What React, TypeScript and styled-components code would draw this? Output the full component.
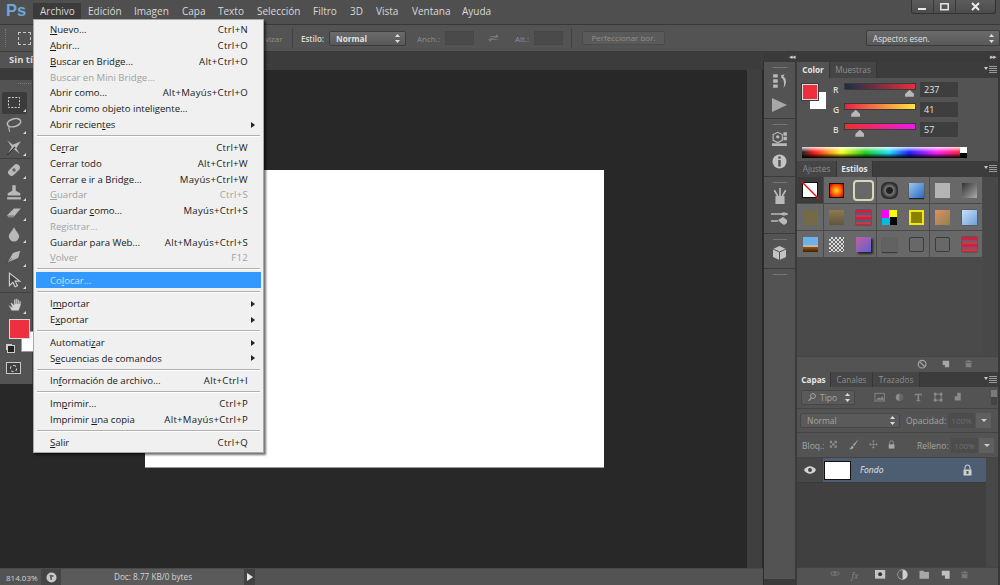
import React from "react";
import styled, { createGlobalStyle } from "styled-components";

const Global = createGlobalStyle`
  html, body { margin: 0; padding: 0; background: #535353; }
  * { box-sizing: border-box; }
  body { font-family: "Open Sans", "Noto Sans", "Liberation Sans", sans-serif; }
  u { text-underline-offset: 1px; text-decoration-thickness: 1px; }
`;

const Screen = styled.div`
  position: relative; width: 1000px; height: 585px; overflow: hidden;
  display: flex; flex-direction: column; background: #535353;
  font-size: 9.5px; color: #d6d6d6;
`;

/* ---------- menu bar ---------- */
const MenuBar = styled.div`
  height: 24px; flex: none; display: flex; align-items: flex-start;
  padding-left: 6px; background: #4f4f4f;
  justify-content: space-between;
`;
const Logo = styled.div`
  width: 27px; font-size: 16.5px; line-height: 20px; font-weight: 700;
  font-family: "Liberation Sans", sans-serif; color: #6da6da;
`;
const MenuLeft = styled.div`display: flex; align-items: flex-start;`;
const MenuItem = styled.div<{ $open?: boolean; $w: number }>`
  width: ${(p) => p.$w}px; height: 16px; margin-top: 3px; padding-left: 7px;
  font-size: 10px; line-height: 17px; color: #d9d9d9; white-space: nowrap;
  background: ${(p) => (p.$open ? "#3b3b3b" : "transparent")};
`;
const WinButtons = styled.div`
  display: flex; height: 14px; width: 85px; margin-right: 4px;
  border: 1px solid #333; border-top: none; border-radius: 0 0 3px 3px;
  background: linear-gradient(#5c5c5c, #4c4c4c);
`;
const WinBtn = styled.div<{ $w: number }>`
  width: ${(p) => p.$w}px; display: flex; align-items: center; justify-content: center;
  border-right: 1px solid #3a3a3a;
  &:last-child { border-right: none; }
`;

/* ---------- options bar ---------- */
const OptionsBar = styled.div`
  height: 28px; flex: none; display: flex; align-items: center;
  background: #535353; border-top: 1px solid #383838; border-bottom: 1px solid #3a3a3a;
`;
const OptGrip = styled.div`
  width: 3px; height: 18px; margin: 0 11px 0 5px; border-left: 1px dotted #7a7a7a;
`;
const MarqueeOpt = styled.div`
  width: 13px; height: 13px; border: 1px dashed #c8c8c8; margin-right: 6px; flex: none;
`;
const OptLabel = styled.div<{ $ml: number; $w: number; $strong?: boolean; $dim?: boolean }>`
  margin-left: ${(p) => p.$ml}px; width: ${(p) => p.$w}px; flex: none; font-size: 8px; white-space: nowrap;
  color: ${(p) => (p.$strong ? "#dcdcdc" : p.$dim ? "#8e8e8e" : "#d6d6d6")};
  font-weight: ${(p) => (p.$strong ? 600 : 400)};
`;
const OptSep = styled.div<{ $ml: number }>`
  margin-left: ${(p) => p.$ml}px; width: 1px; height: 20px; background: #414141; flex: none;
`;
const OptSelect = styled.div<{ $ml: number; $w: number; $h: number }>`
  margin-left: ${(p) => p.$ml}px; width: ${(p) => p.$w}px; height: ${(p) => p.$h}px; flex: none;
  padding: 0 5px 0 6px; display: flex; align-items: center; justify-content: space-between;
  font-size: 8.2px; color: #e0e0e0; border: 1px solid #3c3c3c; border-radius: 2px;
  background: linear-gradient(#6b6b6b, #585858);
`;
const OptInput = styled.div<{ $ml: number }>`
  margin-left: ${(p) => p.$ml}px; width: 29px; height: 14px; flex: none; background: #4a4a4a; border: 1px solid #474747;
`;
const OptButton = styled.div`
  margin-left: 10px; width: 83px; height: 14px; flex: none; border: 1px solid #4a4a4a; border-radius: 2px;
  background: #5a5a5a; color: #8f8f8f; font-size: 8px; line-height: 12px; text-align: center; white-space: nowrap;
`;

/* ---------- body ---------- */
const Body = styled.div`flex: 1; display: flex; min-height: 0;`;
const Main = styled.div`width: 763px; flex: none; display: flex; flex-direction: column;`;
const TabRow = styled.div`
  height: 18px; flex: none; display: flex; background: #3c3c3c;
`;
const DocTab = styled.div`
  width: 70px; height: 16px; background: #535353; padding-left: 9px;
  font-size: 9.5px; line-height: 15px; font-weight: 700; color: #dcdcdc;
`;
const Work = styled.div`flex: 1; display: flex; min-height: 0; background: #282828;`;
const ToolColumn = styled.div`width: 33px; flex: none; display: flex; flex-direction: column;`;
const ToolsHead = styled.div`
  height: 10px; flex: none; background: #3a3a3a; 
`;
const Tools = styled.div`
  height: 304px; flex: none; background: #535353; border-right: 1px solid #3a3a3a; padding: 3px 4px 0 0;
  display: flex; flex-direction: column; align-items: center;
`;
const ToolGrip = styled.div`
  width: 13px; height: 1px; flex: none; align-self: flex-end; margin: 0 -3px 8px 0; border-top: 1px dotted #777;
`;
const ToolBtn = styled.div<{ $on?: boolean; $h?: number }>`
  position: relative; width: 25px; height: ${(p) => p.$h ?? 22}px; flex: none; display: flex; align-items: center; justify-content: center;
  background: ${(p) => (p.$on ? "#3b3b3b" : "transparent")};
  border-radius: 2px;
  &::after {
    content: ""; position: absolute; right: 1px; bottom: 2px; width: 0; height: 0;
    border-left: 3px solid transparent; border-bottom: 3px solid #ddd;
  }
`;
const ToolSep = styled.div<{ $m: number }>`width: 33px; height: 1px; flex: none; background: #414141; margin: ${(p) => p.$m}px 0;`;
const ColorBox = styled.div`position: relative; width: 33px; height: 32px; flex: none; margin-top: 3px; align-self: flex-start;`;
const FgColor = styled.div`
  position: absolute; left: 9px; top: 0; width: 21px; height: 20px; background: #ed2f40; border: 1px solid #d8d8d8; z-index: 1;
`;
const BgColor = styled.div`
  position: absolute; left: 21px; top: 12px; width: 21px; height: 21px; background: #fff; border: 1px solid #999;
`;
const MiniSwap = styled.div`
  position: absolute; left: 7px; top: 26px; width: 8px; height: 8px; background: #222; border: 1px solid #ccc; box-shadow: -2px -2px 0 -1px #ccc;
`;
const QuickMask = styled.div`
  width: 15px; height: 12px; margin: 11px 0 0 -1px; flex: none; border: 1px solid #c8c8c8; background: #3f3f3f; display: flex; align-items: center; justify-content: center;
`;
const QuickDot = styled.div`width: 7px; height: 7px; border-radius: 50%; border: 1px dashed #ddd;`;

const Canvas = styled.div`flex: 1; min-width: 0; padding: 100px 0 0 112px;`;
const DocPage = styled.div`
  width: 459px; height: 298px; background: #fff; border-bottom: 1px solid #999;
`;
const CanvasScroll = styled.div`width: 15px; flex: none; background: #3f3f3f; margin-right: 1px;`;

const StatusBar = styled.div`
  height: 17px; flex: none; display: flex; align-items: center; background: #535353; border-top: 1px solid #4a4a4a;
  font-size: 9px; color: #d4d4d4;
`;
const Zoom = styled.div`width: 41px; padding-left: 6px; flex: none; font-size: 8px;`;
const StatusIcon = styled.div`
  width: 20px; height: 100%; flex: none; background: #454545; display: flex; align-items: center; justify-content: center;
`;
const DocInfo = styled.div`
  width: 183px; padding-left: 53px; height: 100%; line-height: 15px; font-size: 8.2px; flex: none; background: #5a5a5a; white-space: nowrap;
`;
const StatusArrow = styled.div`
  width: 11px; height: 100%; flex: none; background: #424242; display: flex; align-items: center; justify-content: center;
`;

/* ---------- file menu ---------- */
const Menu = styled.div`
  position: absolute; left: 33px; top: 19px; width: 231px; height: 434px; z-index: 5;
  background: #f0f0f0; border: 1px solid #a8a8a8; padding: 2px 2px 0;
  box-shadow: 2px 2px 2px rgba(0,0,0,.55);
`;
const Row = styled.div<{ $dis?: boolean; $hi?: boolean }>`
  position: relative; height: 15.75px; padding: 0 13px 0 14px; display: flex; justify-content: space-between; align-items: center;
  font-size: 9.6px; white-space: nowrap; letter-spacing: -0.02px;
  color: ${(p) => (p.$hi ? "#c4e0ff" : p.$dis ? "#a2a2a2" : "#1a1a1a")};
  background: ${(p) => (p.$hi ? "#3399ff" : "transparent")};
`;
const Shortcut = styled.span`letter-spacing: 0.28px;`;
const Sub = styled.span`
  position: absolute; right: 6px; top: 5px; width: 0; height: 0;
  border-left: 4px solid #222; border-top: 3px solid transparent; border-bottom: 3px solid transparent;
`;
const MenuSep = styled.div<{ $h: number }>`
  height: ${(p) => p.$h}px; display: flex; align-items: center; padding: 0 1px;
  &::after { content: ""; display: block; width: 100%; height: 2px; background: linear-gradient(#b0b0b0 50%, #fff 50%); }
`;

/* ---------- dock ---------- */
const Dock = styled.div`width: 237px; flex: none; display: flex; flex-direction: column; background: #383838;`;
const DockHead = styled.div`
  height: 10px; flex: none; display: flex; justify-content: space-between; align-items: center;
  padding: 0 4px 0 26px; background: #3a3a3a; font-size: 7px; color: #c8c8c8; line-height: 10px; letter-spacing: -1px;
`;
const DockBody = styled.div`flex: 1; display: flex; min-height: 0;`;
const IconCol = styled.div`
  width: 34px; flex: none; padding: 0 2px 5px 0; display: flex; flex-direction: column; background: #3a3a3a; border-left: 1px solid #2c2c2c;
`;
const IconGroup = styled.div<{ $h: number; $fill?: boolean }>`
  height: ${(p) => p.$h}px; ${(p) => (p.$fill ? "flex: 1;" : "")} flex-shrink: 0; margin-bottom: 1px; background: #535353;
  display: flex; flex-direction: column; align-items: center; padding-top: 5px; gap: 8px;
  &::before { content: ""; width: 14px; height: 1px; background: #757575; margin-bottom: -3px; }
`;
const PanelCol = styled.div`flex: 1; display: flex; flex-direction: column; min-width: 0; margin-right: 2px;`;
const TabBar = styled.div<{ $h: number }>`
  height: ${(p) => p.$h}px; flex: none; display: flex; background: #3c3c3c; position: relative;
`;
const Tab = styled.div<{ $on?: boolean; $w: number }>`
  width: ${(p) => p.$w}px; text-align: center; font-size: 8.2px; line-height: 15px; flex: none;
  font-weight: ${(p) => (p.$on ? 700 : 400)};
  color: ${(p) => (p.$on ? "#e6e6e6" : "#8f8f8f")};
  background: ${(p) => (p.$on ? "#535353" : "#454545")};
  border-right: 1px solid #363636;
`;
const PanelMenu = styled.div`
  position: absolute; right: 1px; top: 4px; width: 8px; height: 7px;
  background: repeating-linear-gradient(#9a9a9a 0 1px, transparent 1px 2px);
  &::before {
    content: ""; position: absolute; left: -5px; top: 1px; width: 0; height: 0;
    border-top: 3px solid #ccc; border-left: 2px solid transparent; border-right: 2px solid transparent;
  }
`;
const ColorPanel = styled.div`
  height: 83px; flex: none; background: #535353; position: relative; display: flex; padding: 4px 0 0 2px;
`;
const SwatchPair = styled.div`position: relative; width: 30px; height: 30px; flex: none;`;
const SwFg = styled.div`
  position: absolute; left: 3px; top: 2px; width: 16px; height: 16px; background: #ed2f40; border: 1px solid #ddd; box-shadow: 0 0 0 1px #3b3b3b; z-index: 1;
`;
const SwBg = styled.div`position: absolute; left: 11px; top: 10px; width: 16px; height: 17px; background: #fff;`;
const Sliders = styled.div`display: flex; flex-direction: column; gap: 4.500px; margin-left: 4px;`;
const SliderRow = styled.div`display: flex; height: 15.500px; align-items: center;`;
const ChanLabel = styled.div`width: 12px; font-size: 8.5px; font-weight: 600; color: #dcdcdc;`;
const Track = styled.div<{ $g: string }>`
  position: relative; width: 70px; height: 5px; margin: -7px 5px 0 0; flex: none; background: ${(p) => p.$g}; box-shadow: 0 0 0 1px #3a3a3a;
`;
const Thumb = styled.div`
  position: absolute; top: 6px; width: 9px; height: 7px; background: #b8b8b8; margin-left: -5px;
  clip-path: polygon(50% 0, 100% 60%, 100% 100%, 0 100%, 0 60%);
`;
const ValueBox = styled.div`
  width: 38px; height: 15px; background: #3e3e3e; color: #e2e2e2; font-size: 9px; padding-left: 4px; line-height: 15px;
`;
const Spectrum = styled.div`
  position: absolute; left: 5px; top: 69px; width: 165px; height: 11px; display: flex; border: none;
`;
const SpecRamp = styled.div`
  flex: 1; background:
    linear-gradient(rgba(255,255,255,.85), transparent 45%, transparent 55%, #000),
    linear-gradient(90deg, #222, #ff2020 8%, #ffff20 25%, #20d020 40%, #20e0ff 55%, #2020ff 68%, #ff20ff 85%, #ff2040);
`;
const SpecEnd = styled.div`width: 7px; flex: none; background: linear-gradient(#fff 50%, #000 50%);`;
const StylesPanel = styled.div`
  height: 195px; flex: none; background: #535353; display: flex; flex-direction: column;
`;
const StylesMain = styled.div`flex: 1; display: flex; min-height: 0;`;
const StyleGrid = styled.div`
  width: 186px; flex: none; display: grid; grid-template-columns: repeat(7, 26px); grid-auto-rows: 26px; gap: 1px 0.5px;
  align-content: start; background: #4a4a4a;
`;
const StylesScroll = styled.div`flex: 1; background: #484848;`;
const Cell = styled.div<{ $dark?: boolean }>`
  background: ${(p) => (p.$dark ? "#3c3c3c" : "#686868")}; display: flex; align-items: center; justify-content: center;
`;
const Sw = styled.div<{ $bg: string; $bd?: string; $shadow?: string; $r?: number; $s?: number }>`
  width: ${(p) => p.$s ?? 15}px; height: ${(p) => p.$s ?? 15}px; background: ${(p) => p.$bg}; border: ${(p) => p.$bd ?? "none"};
  box-shadow: ${(p) => p.$shadow ?? "none"}; border-radius: ${(p) => p.$r ?? 0}px;
`;
const NoSwatch = styled.div`position: relative; width: 14px; height: 14px; background: #fff; outline: 1px solid #111; overflow: visible;`;
const PanelFoot = styled.div`
  height: 16px; flex: none; background: #535353; border-top: 1px solid #444;
  display: flex; align-items: center; justify-content: flex-end; gap: 13px; padding-right: 23px;
`;
const LayersPanel = styled.div`flex: 1; display: flex; flex-direction: column; min-height: 0; background: #535353;`;
const LayerRow = styled.div<{ $h: number }>`
  height: ${(p) => p.$h}px; flex: none; display: flex; align-items: center; border-bottom: 1px solid #444; position: relative;
  font-size: 8.5px; color: #9a9a9a;
`;
const MiniSelect = styled.div<{ $w: number; $ml: number }>`
  width: ${(p) => p.$w}px; margin-left: ${(p) => p.$ml}px; height: 15px; flex: none; display: flex; justify-content: space-between; align-items: center; padding: 0 4px 0 6px;
  background: #5a5a5a; border: 1px solid #474747; border-radius: 2px; color: #a5a5a5; font-size: 8.5px;
`;
const TipoLabel = styled.span`display: flex; align-items: center; gap: 4px;`;
const IconRow = styled.div<{ $ml: number; $g: number }>`display: flex; align-items: center; margin-left: ${(p) => p.$ml}px; gap: ${(p) => p.$g}px; flex: none;`;
const DimLabel = styled.div<{ $ml: number; $w?: number }>`margin-left: ${(p) => p.$ml}px; flex: none; width: ${(p) => (p.$w ? `${p.$w}px` : "auto")}; color: #a4a4a4; font-size: 8.5px; white-space: nowrap;`;
const PctBox = styled.div`
  width: 27px; height: 15px; margin-left: 5px; flex: none; background: #4c4c4c; color: #6c6c6c; font-size: 8px; line-height: 15px; text-align: center;
`;
const PctBtn = styled.div`
  width: 15px; height: 15px; margin-left: 1px; flex: none; background: #5f5f5f; display: flex; align-items: center; justify-content: center;
`;
const Caret = styled.div`width: 0; height: 0; border-top: 3px solid #ccc; border-left: 3px solid transparent; border-right: 3px solid transparent;`;
const FilterToggle = styled.div`
  position: absolute; right: 1px; top: 3px; width: 6px; height: 15px; background: linear-gradient(#7a7a7a 45%, #444 45%);
`;
const LayersList = styled.div`flex: 1; display: flex; min-height: 0; background: #404040;`;
const ListMain = styled.div`flex: 1; min-width: 0;`;
const ListScroll = styled.div`width: 12px; flex: none; background: #484848;`;
const LayerItem = styled.div`height: 25px; display: flex; background: #4d5e72; border-bottom: 1px solid #3a3a3a;`;
const EyeCell = styled.div`width: 26px; flex: none; background: #474747; display: flex; align-items: center; justify-content: center;`;
const Thumbnail = styled.div`width: 27px; height: 19px; margin: 3px 0 0 1px; flex: none; background: #fff; border: 1px solid #111;`;
const LayerName = styled.div`margin-left: 9px; flex: 1; font-style: italic; font-size: 8.5px; line-height: 24px; color: #e8e8e8;`;
const LayerLock = styled.div`margin-right: 14px; display: flex; align-items: center;`;
const LayersFoot = styled.div`
  height: 15px; flex: none; margin-bottom: 3px; background: #535353; border-top: 1px solid #444;
  display: flex; align-items: center; gap: 9.5px; padding-left: 32px;
`;

/* ---------- drawings ---------- */
const c = "#b9b9b9";
const Ic = ({ w = 14, h = 14, children }: { w?: number; h?: number; children: React.ReactNode }) => (
  <svg width={w} height={h} viewBox="0 0 14 14" style={{ display: "block", flex: "none" }}>{children}</svg>
);
const Chev = () => (
  <svg width="5" height="9" viewBox="0 0 5 9" style={{ flex: "none" }}><path d="M2.5 0 5 3H0zM2.5 9 0 6h5z" fill="#ddd" /></svg>
);

const tools = {
  marquee: <Ic w={16} h={14}><rect x="1.5" y="1.5" width="11" height="10" fill="none" stroke="#d0d0d0" strokeDasharray="2 1.4" /></Ic>,
  lasso: <Ic w={16} h={16}><ellipse cx="7" cy="5" rx="6" ry="3.4" fill="none" stroke={c} strokeWidth="1.3" transform="rotate(-15 7 5)" /><path d="M3 8c-2 3 1 3 0 5" fill="none" stroke={c} /></Ic>,
  wand: <Ic w={16} h={16}><path d="M1 1l5 4 7-3-4 6 3 5-5-4-6 5 4-7z" fill={c} /><path d="M8 7l-7 7" stroke="#333" /></Ic>,
  band: <Ic w={16} h={16}><rect x="1" y="4" width="12" height="6" rx="3" fill={c} transform="rotate(-45 7 7)" /><circle cx="7" cy="7" r="1.5" fill="#666" /></Ic>,
  stamp: <Ic w={16} h={16}><path d="M5.5 1h3v5l4 2v2H1.500V8l4-2z" fill={c} /><rect x="1" y="11.500" width="12" height="2" fill={c} /></Ic>,
  eraser: <Ic w={16} h={16}><path d="M1 9l6-6h6l-6 7H2z" fill={c} /><path d="M1 9h6v2H2z" fill="#888" /></Ic>,
  drop: <Ic w={16} h={16}><path d="M7 1c2 4 4.500 5.500 4.500 8a4.500 4.500 0 0 1-9 0C2.500 6.500 5 5 7 1z" fill={c} /></Ic>,
  pen: <Ic w={16} h={16}><path d="M13 1l-7 2-4 7-1 3 3-2 7-3zM1 13l4-5" fill={c} stroke="#444" strokeWidth=".6" /></Ic>,
  arrow: <Ic w={16} h={16}><path d="M3 1v11l3-3 2 4 2-1-2-4h4z" fill="#444" stroke="#d0d0d0" /></Ic>,
  hand: <Ic w={16} h={16}><path d="M2 7l3 5h6l2-5V3.500l-1.500.5V6V2.500L10 2.500V6V1.500H8.500V6V2H7v5L5 5 4 5.500 5.500 9z" fill="#d2d2d2" stroke="#666" strokeWidth=".4" /></Ic>,
};

const menu: (null | number | { t: React.ReactNode; k?: string; dis?: boolean; sub?: boolean; hi?: boolean })[] = [
  { t: <><u>N</u>uevo...</>, k: "Ctrl+N" },
  { t: <><u>A</u>brir...</>, k: "Ctrl+O" },
  { t: <><u>B</u>uscar en Bridge...</>, k: "Alt+Ctrl+O" },
  { t: "Buscar en Mini Bridge...", dis: true },
  { t: "Abrir como...", k: "Alt+Mayús+Ctrl+O" },
  { t: "Abrir como objeto inteligente..." },
  { t: <>Abrir recien<u>t</u>es</>, sub: true },
  7.5,
  { t: <>Ce<u>r</u>rar</>, k: "Ctrl+W" },
  { t: "Cerrar todo", k: "Alt+Ctrl+W" },
  { t: "Cerrar e ir a Bridge...", k: "Mayús+Ctrl+W" },
  { t: <><u>G</u>uardar</>, k: "Ctrl+S", dis: true },
  { t: <>Guardar <u>c</u>omo...</>, k: "Mayús+Ctrl+S" },
  { t: "Registrar...", dis: true },
  { t: "Guardar para Web...", k: "Alt+Mayús+Ctrl+S" },
  { t: <><u>V</u>olver</>, k: "F12", dis: true },
  6.5,
  { t: <>Co<u>l</u>ocar...</>, hi: true },
  8,
  { t: <>I<u>m</u>portar</>, sub: true },
  { t: <>E<u>x</u>portar</>, sub: true },
  7,
  { t: <>Automati<u>z</u>ar</>, sub: true },
  { t: <>S<u>e</u>cuencias de comandos</>, sub: true },
  7,
  { t: <>In<u>f</u>ormación de archivo...</>, k: "Alt+Ctrl+I" },
  7,
  { t: <>Im<u>p</u>rimir...</>, k: "Ctrl+P" },
  { t: <>Imprimir <u>u</u>na copia</>, k: "Alt+Mayús+Ctrl+P" },
  7,
  { t: <><u>S</u>alir</>, k: "Ctrl+Q" },
];

const G = "#686868";
const swatches: { bg: string; bd?: string; sh?: string; r?: number; s?: number }[] = [
  { bg: "none" },
  { bg: "radial-gradient(#ffe020, #ff3000 70%, #a00)", bd: "1px solid #111" },
  { bg: G, bd: "2px solid #d8d8b8", r: 4, s: 21 },
  { bg: "radial-gradient(#222 25%, #777 35%, #2a2a2a 65%, #555)", r: 6, s: 17 },
  { bg: "linear-gradient(135deg, #9cc8f0, #2868c0)", sh: "0 1px 1px #222" },
  { bg: "#b4b4b4" },
  { bg: "linear-gradient(135deg, #333, #aaa)" },
  { bg: "#746a48" },
  { bg: "linear-gradient(#8d7b4c, #5f5540)" },
  { bg: "repeating-linear-gradient(#d02040 0 3px, #406090 3px 5px, #c04040 5px 7px)", sh: "0 0 1px #111" },
  { bg: "conic-gradient(#ff0 25%, #000 25% 50%, #0bd 50% 75%, #f0f 75%)" },
  { bg: "#8a8000", bd: "2px solid #f2e800" },
  { bg: "linear-gradient(135deg, #e09060, #908050)" },
  { bg: "linear-gradient(135deg, #c8e0f8, #70a0d8)", sh: "0 0 1px #223" },
  { bg: "linear-gradient(#70b0e8 55%, #f0e8c0 60%, #905010 70%, #402000)" },
  { bg: "repeating-conic-gradient(#ddd 0 25%, #666 0 50%) 0 0/4px 4px" },
  { bg: "linear-gradient(135deg, #c060a0, #6060d0)", sh: "2px 2px 2px #222" },
  { bg: "#626262", sh: "0 1px 1px #3a3a3a" },
  { bg: G, bd: "1px solid #3c3c3c", r: 2 },
  { bg: G, bd: "1px solid #3c3c3c", r: 2 },
  { bg: "repeating-linear-gradient(#d02040 0 3px, #805070 3px 5px, #c04040 5px 7px)", sh: "0 0 1px #111" },
];

export default function App() {
  return (
    <Screen>
      <Global />
      <MenuBar>
        <MenuLeft>
          <Logo>Ps</Logo>
          <MenuItem $open $w={48}>Archivo</MenuItem>
          <MenuItem $w={46}>Edición</MenuItem>
          <MenuItem $w={48}>Imagen</MenuItem>
          <MenuItem $w={36}>Capa</MenuItem>
          <MenuItem $w={39}>Texto</MenuItem>
          <MenuItem $w={56}>Selección</MenuItem>
          <MenuItem $w={37}>Filtro</MenuItem>
          <MenuItem $w={26}>3D</MenuItem>
          <MenuItem $w={36}>Vista</MenuItem>
          <MenuItem $w={50}>Ventana</MenuItem>
          <MenuItem $w={40}>Ayuda</MenuItem>
        </MenuLeft>
        <WinButtons>
          <WinBtn $w={22}><svg width="9" height="9" viewBox="0 0 9 9"><rect y="6" width="8" height="2" fill="#e8e8e8" /></svg></WinBtn>
          <WinBtn $w={22}><svg width="9" height="8" viewBox="0 0 9 8"><rect x=".8" y=".8" width="7.400" height="5.900" fill="none" stroke="#e8e8e8" strokeWidth="1.500" /></svg></WinBtn>
          <WinBtn $w={39}><svg width="9" height="9" viewBox="0 0 9 9"><path d="M1 1l7 7M8 1L1 8" stroke="#eee" strokeWidth="2" /></svg></WinBtn>
        </WinButtons>
      </MenuBar>

      <OptionsBar>
        <OptGrip />
        <MarqueeOpt />
        <OptLabel $ml={228} $w={18} $dim>vizar</OptLabel>
        <OptSep $ml={9} />
        <OptLabel $ml={8} $w={28} $strong>Estilo:</OptLabel>
        <OptSelect $ml={0} $w={77} $h={15}><strong>Normal</strong><Chev /></OptSelect>
        <OptLabel $ml={11} $w={28} $dim>Anch.:</OptLabel>
        <OptInput $ml={0} />
        <svg width="13" height="12" viewBox="0 0 13 12" style={{ marginLeft: 13, flex: "none" }}><path d="M1 4h8V2l3 2.500-3 1.500zM12 8H4v2L1 7.500 4 6z" fill="#777" /></svg>
        <OptLabel $ml={15} $w={19} $dim>Alt.:</OptLabel>
        <OptInput $ml={0} />
        <OptSep $ml={8} />
        <OptButton>Perfeccionar bor.</OptButton>
        <OptSelect $ml={201} $w={134} $h={16}>Aspectos esen.<Chev /></OptSelect>
      </OptionsBar>

      <Body>
        <Main>
          <TabRow><DocTab>Sin título</DocTab></TabRow>
          <Work>
            <ToolColumn>
              <ToolsHead />
              <Tools>
                <ToolGrip />
                <ToolBtn $on>{tools.marquee}</ToolBtn>
                <ToolBtn>{tools.lasso}</ToolBtn>
                <ToolBtn>{tools.wand}</ToolBtn>
                <ToolSep $m={0} />
                <ToolBtn>{tools.band}</ToolBtn>
                <ToolBtn>{tools.stamp}</ToolBtn>
                <ToolBtn $h={20}>{tools.eraser}</ToolBtn>
                <ToolBtn>{tools.drop}</ToolBtn>
                <ToolBtn $h={24}>{tools.pen}</ToolBtn>
                <ToolBtn>{tools.arrow}</ToolBtn>
                <ToolSep $m={1} />
                <ToolBtn>{tools.hand}</ToolBtn>
                <ColorBox>
                  <FgColor /><BgColor /><MiniSwap />
                </ColorBox>
                <QuickMask><QuickDot /></QuickMask>
              </Tools>
            </ToolColumn>
            <Canvas><DocPage /></Canvas>
            <CanvasScroll />
          </Work>
          <StatusBar>
            <Zoom>814.03%</Zoom>
            <StatusIcon><svg width="11" height="11" viewBox="0 0 11 11"><circle cx="5.500" cy="5.500" r="5" fill="#c8c8c8" /><path d="M3.500 3h4v2H6v3H4.500z" fill="#666" /></svg></StatusIcon>
            <DocInfo>Doc: 8.77 KB/0 bytes</DocInfo>
            <StatusArrow><svg width="6" height="8" viewBox="0 0 6 8"><path d="M0 0l6 4-6 4z" fill="#e6e6e6" /></svg></StatusArrow>
          </StatusBar>
        </Main>

        <Dock>
          <DockHead><span>◂◂</span><span>▸▸</span></DockHead>
          <DockBody>
            <IconCol>
              <IconGroup $h={56}>
                <Ic w={16} h={16}><path d="M1 1h4v3H1zM1 5.500h4v3H1zM1 10h4v3H1z" fill={c} /><path d="M8 2l3-1-1 2c3 2 3 7 0 10 1-3 1-7-2-9z" fill={c} /></Ic>
                <svg width="17" height="16" viewBox="0 0 17 16"><path d="M1 1l15 7-15 7z" fill="#a8a8a8" /></svg>
              </IconGroup>
              <IconGroup $h={57}>
                <Ic w={16} h={16}><path d="M1 4l4-2 4 2v5l-4 2-4-2z" fill="none" stroke={c} /><circle cx="5" cy="6" r="1.500" fill={c} /><path d="M10 2h3v3h-3zM10 6h3v3h-3zM0 11.500h13V14H0z" fill={c} /></Ic>
                <svg width="15" height="15" viewBox="0 0 15 15"><circle cx="7.500" cy="7.500" r="7" fill="#c4c4c4" /><path d="M6.300 2.500h2.400v2.200H6.300zM6.300 6h2.400v6.500H6.300z" fill="#535353" /></svg>
              </IconGroup>
              <IconGroup $h={56}>
                <Ic w={16} h={16}><path d="M2 2l3 5M7 0v7M12 2L9 7" stroke={c} strokeWidth="1.500" /><path d="M3 7h8v7H3z" fill={c} /></Ic>
                <svg width="17" height="13" viewBox="0 0 17 13"><path d="M0 2h10l3-1 3 1-3 1-3-1M0 9h7" stroke={c} strokeWidth="1.500" fill="none" /><path d="M7 8l5-3 4 3v3l-3 2-3-2z" fill={c} /></svg>
              </IconGroup>
              <IconGroup $h={34}>
                <svg width="15" height="16" viewBox="0 0 15 16"><path d="M7.500 1l6.500 3v8l-6.500 3L1 12V4z" fill="#c4c4c4" /><path d="M7.500 7L1 4M7.500 7L14 4M7.500 7v8" stroke="#535353" /></svg>
              </IconGroup>
              <IconGroup $h={0} $fill />
            </IconCol>
            <PanelCol>
              <TabBar $h={16}>
                <Tab $on $w={33}>Color</Tab>
                <Tab $w={47}>Muestras</Tab>
                <PanelMenu />
              </TabBar>
              <ColorPanel>
                <SwatchPair><SwFg /><SwBg /></SwatchPair>
                <Sliders>
                  <SliderRow><ChanLabel>R</ChanLabel><Track $g="linear-gradient(90deg,#163048,#ed2c3c)"><Thumb style={{ left: "93%" }} /></Track><ValueBox>237</ValueBox></SliderRow>
                  <SliderRow><ChanLabel>G</ChanLabel><Track $g="linear-gradient(90deg,#ee1e46,#ffe83a)"><Thumb style={{ left: "16%" }} /></Track><ValueBox>41</ValueBox></SliderRow>
                  <SliderRow><ChanLabel>B</ChanLabel><Track $g="linear-gradient(90deg,#ee3026,#f018e8)"><Thumb style={{ left: "22%" }} /></Track><ValueBox>57</ValueBox></SliderRow>
                </Sliders>
                <Spectrum><SpecRamp /><SpecEnd /></Spectrum>
              </ColorPanel>
              <TabBar $h={16}>
                <Tab $w={40}>Ajustes</Tab>
                <Tab $on $w={36}>Estilos</Tab>
                <PanelMenu />
              </TabBar>
              <StylesPanel>
                <StylesMain>
                  <StyleGrid>
                    {swatches.map((s, i) => (
                      <Cell key={i} $dark={i === 0}>
                        {i === 0 ? (
                          <NoSwatch>
                            <svg width="20" height="20" viewBox="0 0 20 20" style={{ position: "absolute", left: -3, top: -3 }}><path d="M1 1l18 18" stroke="#e01020" strokeWidth="1.500" /></svg>
                          </NoSwatch>
                        ) : (
                          <Sw $bg={s.bg} $bd={s.bd} $shadow={s.sh} $r={s.r} $s={s.s} />
                        )}
                      </Cell>
                    ))}
                  </StyleGrid>
                  <StylesScroll />
                </StylesMain>
                <PanelFoot>
                  <Ic w={12} h={12}><circle cx="6" cy="6" r="4.500" fill="none" stroke="#a4a4a4" strokeWidth="1.400" /><path d="M3 3l6 6" stroke="#a4a4a4" strokeWidth="1.400" /></Ic>
                  <Ic w={10} h={10}><path d="M1 1h9v9H4V7H1z" fill="#a8a8a8" /></Ic>
                  <Ic w={10} h={11}><path d="M3 1h4v1.500h3V4H0V2.500h3zM1 5h8v6H1z" fill="#7f7f7f" /></Ic>
                </PanelFoot>
              </StylesPanel>
              <TabBar $h={15}>
                <Tab $on $w={34}>Capas</Tab>
                <Tab $w={42}>Canales</Tab>
                <Tab $w={47}>Trazados</Tab>
                <PanelMenu />
              </TabBar>
              <LayersPanel>
                <LayerRow $h={22}>
                  <MiniSelect $w={54} $ml={4}>
                    <TipoLabel>
                      <svg width="8" height="9" viewBox="0 0 8 9"><circle cx="5" cy="3" r="2.400" fill="none" stroke="#a5a5a5" /><path d="M3.200 4.800L.7 8" stroke="#a5a5a5" strokeWidth="1.200" /></svg>
                      Tipo
                    </TipoLabel>
                    <Chev />
                  </MiniSelect>
                  <IconRow $ml={19} $g={8}>
                    <Ic w={13} h={12}><rect x=".5" y="1.500" width="11" height="9" fill="none" stroke="#8c8c8c" /><path d="M2 9l3-3 2 2 2-3 2 4z" fill="#8c8c8c" /></Ic>
                    <Ic w={11} h={12}><circle cx="5.500" cy="6" r="4.500" fill="#8c8c8c" /><path d="M5.500 1.500a4.500 4.500 0 0 1 0 9z" fill="#666" /></Ic>
                    <Ic w={11} h={12}><path d="M1 1.500h9v2.500H9L8.500 3H6.500v7H8v1H3v-1h1.500V3H2.500L2 4H1z" fill="#8c8c8c" /></Ic>
                    <Ic w={12} h={12}><path d="M2.500 2.500h7v7h-7z" fill="none" stroke="#8c8c8c" /><path d="M1 1h3v3H1zM8 1h3v3H8zM1 8h3v3H1zM8 8h3v3H8z" fill="#8c8c8c" /></Ic>
                    <Ic w={12} h={12}><path d="M5 1h4v9H2V5h3z" fill="#8c8c8c" /></Ic>
                  </IconRow>
                  <FilterToggle />
                </LayerRow>
                <LayerRow $h={24}>
                  <MiniSelect $w={100} $ml={3}><span>Normal</span><Chev /></MiniSelect>
                  <DimLabel $ml={6} $w={37}>Opacidad:</DimLabel>
                  <PctBox>100%</PctBox>
                  <PctBtn><Caret /></PctBtn>
                </LayerRow>
                <LayerRow $h={25}>
                  <DimLabel $ml={5} $w={24}>Bloq.:</DimLabel>
                  <IconRow $ml={3} $g={8}>
                    <Ic w={11} h={11}><path d="M1 1h3v3H1zM7 1h3v3H7zM4 4h3v3H4zM1 7h3v3H1zM7 7h3v3H7z" fill="#8c8c8c" /></Ic>
                    <Ic w={13} h={12}><path d="M12 0L5 7l2 1zM1 12c3 0 5-1 5-3L4.500 8C3 8 3 11 1 12z" fill="#a8a8a8" /></Ic>
                    <Ic w={11} h={11}><path d="M5.500 0l2 2H6v3h3V3.500l2 2-2 2V6H6v3h1.500l-2 2-2-2H5V6H2v1.500l-2-2 2-2V5h3V2H3.500z" fill="#8c8c8c" /></Ic>
                    <Ic w={10} h={12}><path d="M2.500 6V3.500a2.500 2.500 0 0 1 5 0V6" fill="none" stroke="#a8a8a8" /><rect x="1" y="6" width="8" height="6" fill="#a8a8a8" /></Ic>
                  </IconRow>
                  <DimLabel $ml={19} $w={29}>Relleno:</DimLabel>
                  <PctBox>100%</PctBox>
                  <PctBtn><Caret /></PctBtn>
                </LayerRow>
                <LayersList>
                  <ListMain>
                    <LayerItem>
                      <EyeCell><svg width="12" height="8" viewBox="0 0 12 8"><path d="M0 4c3-5 9-5 12 0-3 5-9 5-12 0z" fill="#d4d4d4" /><circle cx="6" cy="4" r="2" fill="#444" /></svg></EyeCell>
                      <Thumbnail />
                      <LayerName>Fondo</LayerName>
                      <LayerLock><svg width="9" height="12" viewBox="0 0 9 12"><path d="M2 5.500V3.500a2.500 2.500 0 0 1 5 0v2" fill="none" stroke="#ddd" /><rect x=".5" y="5.500" width="8" height="6" fill="#cfcfcf" /><rect x="3.500" y="7" width="2" height="3" fill="#555" /></svg></LayerLock>
                    </LayerItem>
                  </ListMain>
                  <ListScroll />
                </LayersList>
                <LayersFoot>
                  <Ic w={13} h={10}><rect x=".7" y="2.700" width="7" height="4.600" rx="2.300" fill="none" stroke="#858585" /><rect x="5" y="2.700" width="7" height="4.600" rx="2.300" fill="none" stroke="#858585" /></Ic>
                  <DimLabel $ml={0} $w={13}><i style={{ color: "#858585" }}>fx</i></DimLabel>
                  <Ic w={13} h={11}><rect width="13" height="11" fill="#c4c4c4" /><circle cx="6.500" cy="5.500" r="2.500" fill="#333" /></Ic>
                  <Ic w={13} h={13}><circle cx="6" cy="6" r="5.500" fill="#cfcfcf" /><path d="M6 1a5 5 0 0 0 0 10z" fill="#555" /></Ic>
                  <Ic w={12} h={11}><path d="M0 1h5l1 1.500h6V11H0z" fill="#a8a8a8" /></Ic>
                  <Ic w={11} h={11}><path d="M1 1h10v10H5V7H1z" fill="#c0c0c0" /></Ic>
                  <Ic w={10} h={11}><path d="M3 1h4v1.500h3V4H0V2.500h3zM1 5h8v6H1z" fill="#777" /></Ic>
                </LayersFoot>
              </LayersPanel>
            </PanelCol>
          </DockBody>
        </Dock>
      </Body>

      <Menu>
        {menu.map((m, i) =>
          m === null || typeof m === "number" ? (
            <MenuSep key={i} $h={m ?? 7} />
          ) : (
            <Row key={i} $dis={m.dis} $hi={m.hi}>
              <span>{m.t}</span>
              {m.k && <Shortcut>{m.k}</Shortcut>}
              {m.sub && <Sub />}
            </Row>
          )
        )}
      </Menu>
    </Screen>
  );
}
